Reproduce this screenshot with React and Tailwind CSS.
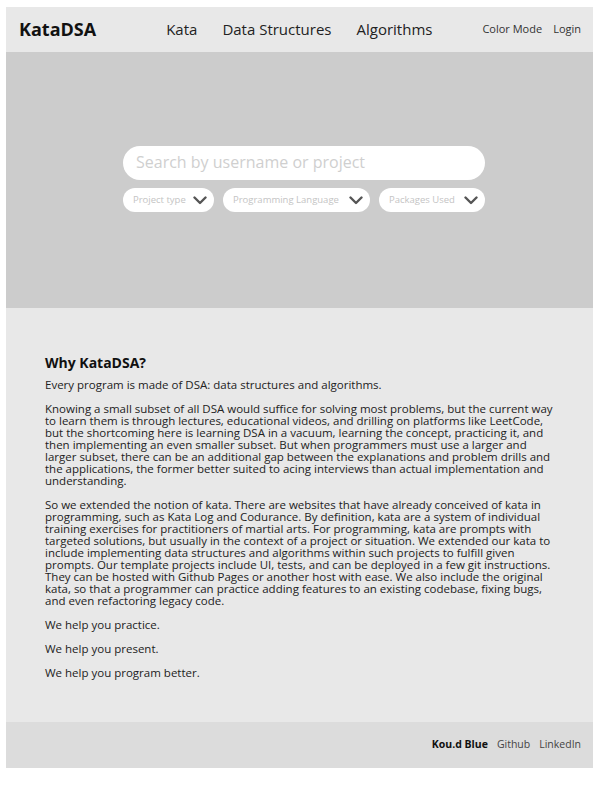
const FONT = { fontFamily: '"Open Sans", "Noto Sans", sans-serif' };

const whyParagraphs = [
  ['Every program is made of DSA: data structures and algorithms.'],
  [
    'Knowing a small subset of all DSA would suffice for solving most problems, but the current way',
    'to learn them is through lectures, educational videos, and drilling on platforms like LeetCode,',
    'but the shortcoming here is learning DSA in a vacuum, learning the concept, practicing it, and',
    'then implementing an even smaller subset. But when programmers must use a larger and',
    'larger subset, there can be an additional gap between the explanations and problem drills and',
    'the applications, the former better suited to acing interviews than actual implementation and',
    'understanding.',
  ],
  [
    'So we extended the notion of kata. There are websites that have already conceived of kata in',
    'programming, such as Kata Log and Codurance. By definition, kata are a system of individual',
    'training exercises for practitioners of martial arts. For programming, kata are prompts with',
    'targeted solutions, but usually in the context of a project or situation. We extended our kata to',
    'include implementing data structures and algorithms within such projects to fulfill given',
    'prompts. Our template projects include UI, tests, and can be deployed in a few git instructions.',
    'They can be hosted with Github Pages or another host with ease. We also include the original',
    'kata, so that a programmer can practice adding features to an existing codebase, fixing bugs,',
    'and even refactoring legacy code.',
  ],
  ['We help you practice.'],
  ['We help you present.'],
  ['We help you program better.'],
];

function Chevron() {
  return (
    <svg width="14" height="9" viewBox="0 0 14 9" fill="none" className="shrink-0">
      <path d="M1.5 1.5 L7 7 L12.5 1.5" stroke="#555" strokeWidth="2.4" strokeLinecap="round" strokeLinejoin="round" />
    </svg>
  );
}

function Dropdown({ label, width }) {
  return (
    <button
      className={`flex items-center justify-between h-[24px] rounded-full bg-white pl-[10px] pr-[7px] ${width}`}
    >
      <span className="text-[9.5px] text-[#c4c4c4]">{label}</span>
      <Chevron />
    </button>
  );
}

export default function App() {
  return (
    <div className="bg-white pl-[6px] pr-[7px] pt-[7px] pb-[32px] text-[#222]" style={FONT}>
      {/* Header */}
      <header className="flex items-center h-[45px] bg-[#e8e8e8] pl-[13px] pr-[12px] pb-[1px]">
        <span className="text-[18px] font-bold text-[#111]">KataDSA</span>
        <nav className="flex items-center gap-[25px] ml-[70px] text-[15px] text-[#222]">
          <a>Kata</a>
          <a>Data Structures</a>
          <a>Algorithms</a>
        </nav>
        <div className="ml-auto flex items-center gap-[11px] text-[11px] text-[#333]">
          <a>Color Mode</a>
          <a>Login</a>
        </div>
      </header>

      {/* Search hero */}
      <section className="h-[256px] bg-[#cccccc] flex flex-col items-center justify-center pl-[9px] pb-[2px]">
        <div className="w-[362px] flex flex-col gap-[8px]">
          <div className="h-[34px] rounded-full bg-white flex items-center px-[13px] pb-[2px]">
            <span className="text-[16px] text-[#cfcfcf]">Search by username or project</span>
          </div>
          <div className="flex gap-[9px]">
            <Dropdown label="Project type" width="w-[91px]" />
            <Dropdown label="Programming Language" width="w-[147px]" />
            <Dropdown label="Packages Used" width="w-[106px]" />
          </div>
        </div>
      </section>

      {/* Why */}
      <main className="bg-[#e8e8e8] pt-[46px] pb-[43px] pl-[39px]">
        <h2 className="text-[14px] leading-[18px] font-bold text-[#111] mb-[7px]">Why KataDSA?</h2>
        <div className="flex flex-col gap-[12px] text-[11.5px] leading-[12px] text-[#222]">
          {whyParagraphs.map((lines, i) => (
            <p key={i}>
              {lines.map((line, j) => (
                <span key={j} className="block whitespace-nowrap">
                  {line}
                </span>
              ))}
            </p>
          ))}
        </div>
      </main>

      {/* Footer */}
      <footer className="h-[46px] bg-[#dcdcdc] flex items-center justify-end gap-[9px] pr-[12px] text-[10.5px]">
        <span className="font-bold text-[#111]">Kou.d Blue</span>
        <a className="text-[#444]">Github</a>
        <a className="text-[#444]">LinkedIn</a>
      </footer>
    </div>
  );
}
